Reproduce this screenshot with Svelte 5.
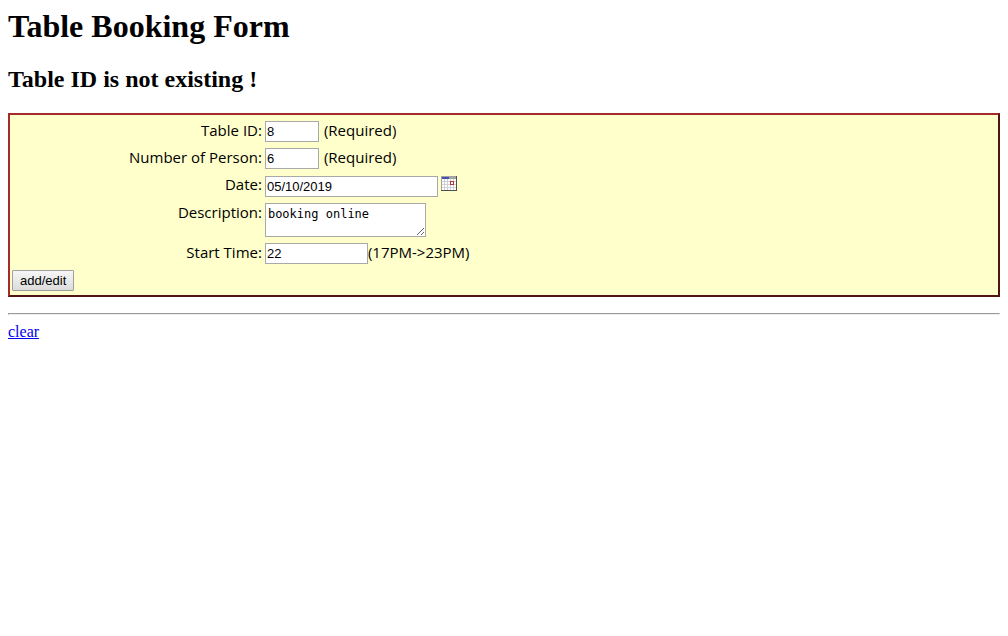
<script>
  let tableId = $state('8');
  let persons = $state('6');
  let date = $state('05/10/2019');
  let description = $state('booking online');
  let startTime = $state('22');
</script>

<main>
  <h1>Table Booking Form</h1>
  <h2>Table ID is not existing !</h2>

  <form onsubmit={(e) => e.preventDefault()}>
    <div class="row">
      <label for="table-id">Table ID:</label>
      <div class="field">
        <input id="table-id" class="short" type="text" bind:value={tableId} />
        <span class="note">(Required)</span>
      </div>
    </div>
    <div class="row">
      <label for="persons">Number of Person:</label>
      <div class="field">
        <input id="persons" class="short" type="text" bind:value={persons} />
        <span class="note">(Required)</span>
      </div>
    </div>
    <div class="row">
      <label for="date">Date:</label>
      <div class="field date">
        <input id="date" class="long" type="text" bind:value={date} />
        <button class="calendar" type="button" aria-label="Pick a date">
          <svg width="16" height="15" viewBox="0 0 16 15" shape-rendering="crispEdges">
            <rect width="16" height="15" fill="#a4a4a4" />
            <rect x="1" y="1" width="7" height="2" fill="#4450b0" />
            <rect x="1" y="3" width="14" height="11" fill="#d2d2d6" />
            {#each [3, 6, 9, 12] as y}
              {#each [1, 4, 7, 10, 13] as x}
                <rect {x} {y} width="2" height="2" fill="#fff" />
              {/each}
            {/each}
            <rect x="9" y="5" width="4" height="4" fill="#b03838" />
            <rect x="10" y="6" width="2" height="2" fill="#fff" />
            <path d="M15 0h1v15H0v-1h15z" fill="#505050" />
          </svg>
        </button>
      </div>
    </div>
    <div class="row">
      <label for="description">Description:</label>
      <div class="field">
        <textarea id="description" bind:value={description}></textarea>
      </div>
    </div>
    <div class="row">
      <label for="start-time">Start Time:</label>
      <div class="field">
        <input id="start-time" class="medium" type="text" bind:value={startTime} />
        <span>(17PM-&gt;23PM)</span>
      </div>
    </div>
    <button class="submit" type="submit">add/edit</button>
  </form>

  <hr />
  <a href="#clear">clear</a>
</main>

<style>
  :global(body) {
    margin: 0;
    background: #fff;
  }
  main {
    padding: 8px;
    color: #000;
    font-family: "Liberation Serif", "Times New Roman", serif;
    font-size: 16px;
    line-height: 20px;
  }
  h1 {
    margin: 0 0 20px;
    font-size: 32px;
    line-height: 37px;
  }
  h2 {
    margin: 0 0 20px;
    font-size: 24px;
    line-height: 28px;
  }
  form {
    display: flex;
    flex-direction: column;
    align-items: stretch;
    gap: 6px;
    padding: 6px 2px 4px;
    border: 2px solid;
    border-color: #a52a2a #501414 #501414 #a52a2a;
    background: #ffffcc;
    font-family: "Trebuchet MS", "Open Sans", sans-serif;
    font-size: 15px;
    line-height: 18px;
  }
  .row {
    display: grid;
    grid-template-columns: 25.4% 1fr;
    gap: 3px;
  }
  label {
    text-align: right;
  }
  .field {
    display: flex;
    align-items: flex-start;
  }
  .date {
    padding-top: 1px;
  }
  input,
  textarea {
    box-sizing: border-box;
    margin: 0;
    border: 1px solid #a9a9a9;
    border-radius: 0;
    background: #fff;
    color: #000;
    outline: none;
  }
  input {
    height: 21px;
    padding: 1px;
    font: 13px "Liberation Sans", Arial, sans-serif;
  }
  .short {
    width: 54px;
  }
  .medium {
    width: 103px;
  }
  .long {
    width: 173px;
  }
  textarea {
    width: 161px;
    height: 34px;
    padding: 3px 2px 2px;
    font: 12px/15px "DejaVu Sans Mono", monospace;
    resize: both;
    overflow: auto;
  }
  .note {
    margin-left: 5px;
  }
  .calendar {
    margin: 0 0 0 3px;
    padding: 0;
    border: 0;
    background: none;
  }
  .calendar svg {
    display: block;
  }
  .submit {
    align-self: flex-start;
    height: 21px;
    margin: 0;
    padding: 0 7px;
    border: 1px solid #a0a0a0;
    border-radius: 1px;
    background: linear-gradient(#f6f6f6, #dcdcdc);
    color: #000;
    font: 13px "Liberation Sans", Arial, sans-serif;
  }
  hr {
    margin: 16px 0 7px;
    border: 1px solid;
    border-color: #9a9a9a #eee #eee #9a9a9a;
  }
  a {
    color: #0000ee;
  }
</style>
